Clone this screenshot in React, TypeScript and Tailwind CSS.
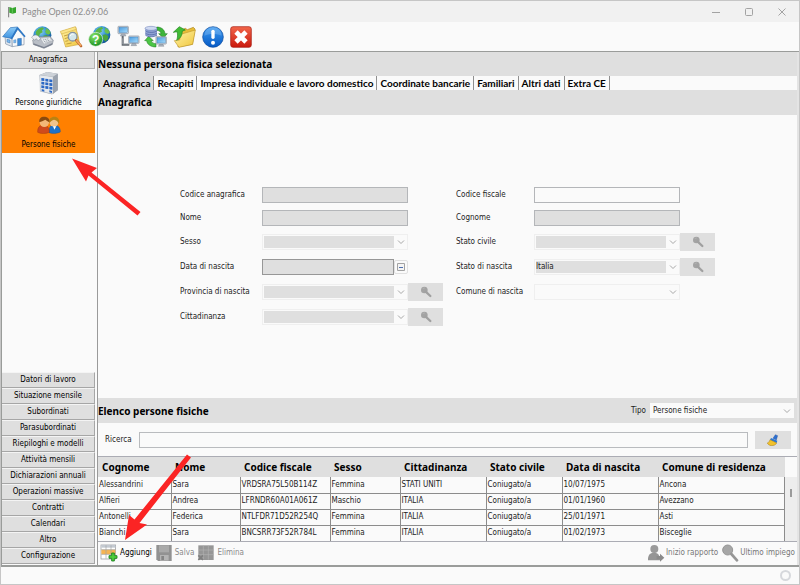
import React, { useState } from 'react';

interface Person {
  cognome: string;
  nome: string;
  codiceFiscale: string;
  sesso: string;
  cittadinanza: string;
  statoCivile: string;
  dataNascita: string;
  comune: string;
}

const people: Person[] = [
  { cognome: 'Alessandrini', nome: 'Sara', codiceFiscale: 'VRDSRA75L50B114Z', sesso: 'Femmina', cittadinanza: 'STATI UNITI', statoCivile: 'Coniugato/a', dataNascita: '10/07/1975', comune: 'Ancona' },
  { cognome: 'Alfieri', nome: 'Andrea', codiceFiscale: 'LFRNDR60A01A061Z', sesso: 'Maschio', cittadinanza: 'ITALIA', statoCivile: 'Coniugato/a', dataNascita: '01/01/1960', comune: 'Avezzano' },
  { cognome: 'Antonelli', nome: 'Federica', codiceFiscale: 'NTLFDR71D52R254Q', sesso: 'Femmina', cittadinanza: 'ITALIA', statoCivile: 'Coniugato/a', dataNascita: '25/01/1971', comune: 'Asti' },
  { cognome: 'Bianchi', nome: 'Sara', codiceFiscale: 'BNCSRR73F52R784L', sesso: 'Femmina', cittadinanza: 'ITALIA', statoCivile: 'Coniugato/a', dataNascita: '01/02/1973', comune: 'Bisceglie' },
];

const columns: { key: keyof Person; label: string; width: string }[] = [
  { key: 'cognome', label: 'Cognome', width: 'w-[73px]' },
  { key: 'nome', label: 'Nome', width: 'w-[69px]' },
  { key: 'codiceFiscale', label: 'Codice fiscale', width: 'w-[90px]' },
  { key: 'sesso', label: 'Sesso', width: 'w-[70px]' },
  { key: 'cittadinanza', label: 'Cittadinanza', width: 'w-[86px]' },
  { key: 'statoCivile', label: 'Stato civile', width: 'w-[76px]' },
  { key: 'dataNascita', label: 'Data di nascita', width: 'w-[96px]' },
  { key: 'comune', label: 'Comune di residenza', width: '' },
];

const tabs = ['Anagrafica', 'Recapiti', 'Impresa individuale e lavoro domestico', 'Coordinate bancarie', 'Familiari', 'Altri dati', 'Extra CE'];

const sections = [
  'Datori di lavoro', 'Situazione mensile', 'Subordinati', 'Parasubordinati', 'Riepiloghi e modelli', 'Attività mensili',
  'Dichiarazioni annuali', 'Operazioni massive', 'Contratti', 'Calendari', 'Altro', 'Configurazione',
];

/* ---------- toolbar icons ---------- */

const Defs: React.FC = () => (
  <svg className="absolute h-0 w-0" aria-hidden="true">
    <defs>
      <radialGradient id="globe" cx="40%" cy="30%" r="75%">
        <stop offset="0" stopColor="#8fd0f5" />
        <stop offset="0.5" stopColor="#2f8fd0" />
        <stop offset="1" stopColor="#0d4a8c" />
      </radialGradient>
      <linearGradient id="roof" x1="0" y1="0" x2="0" y2="1">
        <stop offset="0" stopColor="#8ccbf8" />
        <stop offset="1" stopColor="#3f93e0" />
      </linearGradient>
      <linearGradient id="paper" x1="0" y1="0" x2="1" y2="1">
        <stop offset="0" stopColor="#fff3a8" />
        <stop offset="1" stopColor="#f0c63c" />
      </linearGradient>
      <radialGradient id="green" cx="40%" cy="30%" r="75%">
        <stop offset="0" stopColor="#8be86a" />
        <stop offset="1" stopColor="#138a1c" />
      </radialGradient>
      <linearGradient id="screen" x1="0" y1="0" x2="1" y2="1">
        <stop offset="0" stopColor="#4d9de0" />
        <stop offset="1" stopColor="#a5dafa" />
      </linearGradient>
      <linearGradient id="blueball" x1="0" y1="0" x2="0" y2="1">
        <stop offset="0" stopColor="#3f9df2" />
        <stop offset="1" stopColor="#0558c4" />
      </linearGradient>
      <linearGradient id="redbox" x1="0" y1="0" x2="0" y2="1">
        <stop offset="0" stopColor="#f2664a" />
        <stop offset="1" stopColor="#c9190d" />
      </linearGradient>
    </defs>
  </svg>
);

const Land: React.FC = () => (
  <>
    <path d="M17 22c4-9 12-14 20-15l5 4-6 5 2 6-8 4-3 8-7 1z" fill="#5cb545" />
    <path d="M46 9c8 2 14 8 16 15l-6 5-7-3-4-7 4-5z" fill="#6bc04c" />
    <path d="M40 32l10-2 8 6-2 10-8 6-6-8z" fill="#4ba53a" />
  </>
);

const HomeIcon = () => (
  <svg viewBox="0 0 72 72" className="h-6 w-6">
    <path d="M9 34l22 6v25L11 57z" fill="#dfe6ee" stroke="#7e90a4" strokeWidth="2" />
    <path d="M30 38L47 13l19 22v24l-35 6z" fill="#f8fafc" stroke="#7e90a4" strokeWidth="2" />
    <path d="M2 35L25 8l22-2-19 34z" fill="url(#roof)" stroke="#2a6fb8" strokeWidth="2" />
    <path d="M28 42L47 9l22 26" fill="none" stroke="#2d78c6" strokeWidth="5" strokeLinejoin="round" />
    <path d="M47 41l11-1v20l-11 2z" fill="#3d8cdc" stroke="#2864a2" strokeWidth="1.5" />
    <path d="M15 43l9 2v9l-9-3z" fill="#7db9ee" stroke="#3f78b4" strokeWidth="1.5" />
    <path d="M35 45l7-1v9l-7 1z" fill="#7db9ee" stroke="#3f78b4" strokeWidth="1" />
  </svg>
);

const WebPhoneIcon = () => (
  <svg viewBox="0 0 72 72" className="h-6 w-6">
    <circle cx="37" cy="31" r="27" fill="url(#globe)" />
    <Land />
    <path d="M8 45l12-9 40-2 10 12-3 12-25 12L10 58z" fill="#b9bec6" stroke="#6d7580" strokeWidth="1.5" />
    <path d="M5 37c4-7 13-10 20-4l7 8-7 6-7-6-4 5z" fill="#eceef1" stroke="#757d88" strokeWidth="1.5" />
    <path d="M31 40l28-3 8 10-24 12z" fill="#e9ecef" stroke="#8b929c" strokeWidth="1" />
    <path d="M39 45l18-4M42 50l19-5M44 55l18-7" stroke="#7c858f" strokeWidth="2" strokeDasharray="4 2" />
    <path d="M11 55l31 11 25-12v5L42 70 10 59z" fill="#7b8290" />
  </svg>
);

const NoteSearchIcon = () => (
  <svg viewBox="0 0 72 72" className="h-6 w-6">
    <path d="M6 20l44-14 8 30 4 22-42 8z" fill="url(#paper)" stroke="#cda63a" strokeWidth="2" />
    <path d="M4 19L49 5l3 8L7 27z" fill="#fbe58b" stroke="#cda63a" strokeWidth="1.5" />
    <path d="M15 33l20-6M17 41l10-3M19 49l9-2M22 57l16-3" stroke="#b99233" strokeWidth="2.5" />
    <circle cx="41" cy="35" r="13" fill="#cfe8f8" fillOpacity="0.9" stroke="#8694a2" strokeWidth="4" />
    <path d="M34 33c1-5 6-7 10-5" stroke="#fff" strokeWidth="3" fill="none" />
    <path d="M52 46l14 17" stroke="#b8622c" strokeWidth="8" strokeLinecap="round" />
    <path d="M53 47l12 14" stroke="#f3a55c" strokeWidth="5" strokeLinecap="round" />
  </svg>
);

const WebHelpIcon = () => (
  <svg viewBox="0 0 72 72" className="h-6 w-6">
    <g transform="translate(8 -1) scale(.97)">
      <circle cx="37" cy="31" r="27" fill="url(#globe)" />
      <Land />
    </g>
    <circle cx="26" cy="43" r="21" fill="url(#green)" stroke="#e3f5df" strokeWidth="2" />
    <text x="26" y="56" textAnchor="middle" fill="#fff" fontSize="36" fontWeight="bold" fontFamily="Liberation Sans, sans-serif">?</text>
  </svg>
);

const Monitor: React.FC<{ x: number; y: number }> = ({ x, y }) => (
  <g transform={`translate(${x} ${y})`}>
    <path d="M12 22h9l4 8H8z" fill="#a9b1bb" stroke="#6d7682" strokeWidth="1" />
    <rect x="1" y="1" width="31" height="22" rx="2" fill="#dfe4ea" stroke="#7f8a96" strokeWidth="2" />
    <rect x="4" y="4" width="25" height="16" fill="url(#screen)" stroke="#2d6da8" strokeWidth="1" />
  </g>
);

const NetworkIcon = () => (
  <svg viewBox="0 0 72 72" className="h-6 w-6">
    <path d="M20 32v27h20" fill="none" stroke="#62686f" strokeWidth="6" />
    <path d="M20 40v17h20" fill="none" stroke="#a3a9b0" strokeWidth="2" />
    <Monitor x={5} y={3} />
    <Monitor x={37} y={32} />
  </svg>
);

const SyncIcon = () => (
  <svg viewBox="0 0 72 72" className="h-6 w-6">
    <path d="M38 6c14 0 24 8 25 20l7 0-12 13-14-13h7c-1-6-6-10-13-10z" fill="#3db43a" stroke="#167418" strokeWidth="1.5" />
    <path d="M36 66C20 66 9 58 8 47H2l12-13 14 13h-7c2 5 8 9 15 9z" fill="#4cc544" stroke="#167418" strokeWidth="1.5" />
    <path d="M4 10v20c5 7 30 7 35 0V10z" fill="#8fa2d4" />
    <path d="M4 17c6 7 29 7 35 0M4 24c6 7 29 7 35 0M4 30c6 7 29 7 35 0" stroke="#4a5f9f" strokeWidth="2" fill="none" />
    <ellipse cx="21" cy="10" rx="18" ry="6" fill="#cfd9f2" stroke="#6478b2" strokeWidth="1.5" />
    <Monitor x={35} y={34} />
  </svg>
);

const FolderUpIcon = () => (
  <svg viewBox="0 0 72 72" className="h-6 w-6">
    <path d="M22 18l18-8 6 4 18-7 5 5-8 46-43 8z" fill="#e8bd38" stroke="#a98420" strokeWidth="2" />
    <path d="M26 28l44-13-8 43-41 9-14-20 16-2z" fill="url(#paper)" stroke="#c19a2c" strokeWidth="2" />
    <path d="M4 22L22 5l18 10-9 3c0 13-6 23-17 28 3-9 4-17 1-26z" fill="#42bb36" stroke="#1f861f" strokeWidth="2" />
  </svg>
);

const AlertIcon = () => (
  <svg viewBox="0 0 72 72" className="h-6 w-6">
    <circle cx="36" cy="36" r="31" fill="url(#blueball)" stroke="#07479c" strokeWidth="2" />
    <path d="M10 32a26 26 0 0 1 52 0c-14-7-38-7-52 0z" fill="#fff" fillOpacity="0.18" />
    <rect x="31" y="14" width="10" height="28" rx="5" fill="#fff" />
    <circle cx="36" cy="53" r="6" fill="#fff" />
  </svg>
);

const CloseAppIcon = () => (
  <svg viewBox="0 0 72 72" className="h-6 w-6">
    <rect x="5" y="5" width="62" height="62" rx="7" fill="url(#redbox)" stroke="#a3150b" strokeWidth="2" />
    <path d="M21 21l30 30M51 21L21 51" stroke="#fff" strokeWidth="14" />
  </svg>
);

const BuildingIcon = () => (
  <svg viewBox="0 0 72 72" className="h-6 w-6">
    <path d="M8 12L30 3l32 5v50L44 70 10 61z" fill="#8f97a3" />
    <path d="M8 12l40 5v52l-38-8z" fill="#e6e9ed" stroke="#a5acb5" strokeWidth="1" />
    <path d="M48 17l14-9v50L48 69z" fill="#9ba3ae" />
    <path d="M8 12L30 3l32 5-14 9z" fill="#cdd2d8" />
    {[21, 32, 43].map(y => (
      <g key={y} fill="#2b68c4">
        <path d={`M13 ${y}l9 1v8l-9-1z`} />
        <path d={`M25 ${y + 2}l9 1v8l-9-1z`} />
        <path d={`M37 ${y + 4}l9 1v8l-9-1z`} />
      </g>
    ))}
    <path d="M14 54l8 2v6l-8-2zM37 58l8 2v6l-8-2z" fill="#2b68c4" />
  </svg>
);

const PeopleIcon = () => (
  <svg viewBox="0 0 72 54" className="h-[18px] w-6">
    <path d="M36 50c-1-15 4-23 15-23s20 8 19 21c-8 5-26 6-34 2z" fill="#1f72c8" stroke="#0d4a8e" strokeWidth="1" />
    <circle cx="51" cy="18" r="14" fill="#f3c48b" />
    <path d="M37 22C34 8 42 2 52 2s18 8 13 22c-2-9-7-12-14-13-6 2-10 5-14 11z" fill="#b98212" />
    <path d="M48 31l4 10 6-10z" fill="#fff" />
    <path d="M2 49c-1-15 6-22 17-22s19 8 18 22c-8 5-28 5-35 0z" fill="#cf4a1c" stroke="#8d2d0c" strokeWidth="1" />
    <circle cx="22" cy="19" r="14" fill="#f3b878" />
    <path d="M7 19C5 8 12 2 21 2s18 5 16 17c-5-3-9-6-12-8-6 4-13 5-18 8z" fill="#8a4a0e" />
  </svg>
);

const KeyIcon = () => (
  <svg viewBox="0 0 36 36" className="h-3 w-3">
    <circle cx="13" cy="12" r="10" fill="#a3a3a3" />
    <path d="M17 17l14 13" stroke="#a0a0a0" strokeWidth="7" strokeLinecap="round" />
    <path d="M8 9c2-3 5-3 7-3" stroke="#b9b9b9" strokeWidth="2" fill="none" />
  </svg>
);

const BrushIcon = () => (
  <svg viewBox="0 0 36 36" className="h-3 w-3">
    <path d="M18 13l7-11 7 3-4 13z" fill="#2c6fd0" stroke="#1a478f" strokeWidth="1" />
    <path d="M12 12l19 8-2 7-20-9z" fill="#2a78d8" />
    <path d="M9 17l20 10c-3 6-9 8-16 8C6 34 3 31 1 27c5-2 6-5 8-10z" fill="#f2c22c" stroke="#a57b10" strokeWidth="1.5" />
  </svg>
);

const GridAddIcon = () => (
  <svg viewBox="0 0 54 54" className="h-[18px] w-[18px]">
    <rect x="3" y="3" width="44" height="42" fill="#fff" stroke="#8b8f96" strokeWidth="2" />
    <rect x="4" y="3" width="42" height="8" fill="#c3c9d1" />
    <rect x="4" y="17" width="42" height="14" fill="#f7b552" />
    <path d="M4 17h42M4 31h42M18 4v40M33 4v40" stroke="#a0a3a8" strokeWidth="2" />
    <path d="M35 27h8v8h8v8h-8v8h-8v-8h-8v-8h8z" fill="#4fcf3c" stroke="#157c17" strokeWidth="2.5" />
  </svg>
);

const SaveIcon = () => (
  <svg viewBox="0 0 54 54" className="h-[18px] w-[18px]">
    <path d="M4 3h46v48H9l-5-5z" fill="#929292" />
    <rect x="12" y="4" width="30" height="21" fill="#a9a9a9" />
    <rect x="15" y="33" width="26" height="17" fill="#b4b4b4" />
    <rect x="19" y="36" width="8" height="12" fill="#858585" />
  </svg>
);

const GridDeleteIcon = () => (
  <svg viewBox="0 0 54 54" className="h-[18px] w-[18px]">
    <rect x="4" y="4" width="46" height="44" fill="#969696" />
    <path d="M4 18h46M4 32h46M19 5v42M34 5v42" stroke="#b2b2b2" strokeWidth="2" />
    <path d="M4 34l14 14M18 34L4 48" stroke="#808080" strokeWidth="5" />
  </svg>
);

const UserStartIcon = () => (
  <svg viewBox="0 0 54 54" className="h-[18px] w-[18px]">
    <circle cx="22" cy="15" r="12" fill="#9a9a9a" />
    <path d="M3 49c-1-16 6-23 18-23s18 7 18 23z" fill="#959595" />
    <path d="M29 36h10v-7l13 12-13 12v-7H29z" fill="#8a8a8a" />
  </svg>
);

const LensIcon = () => (
  <svg viewBox="0 0 54 54" className="h-[18px] w-[18px]">
    <circle cx="20" cy="18" r="15" fill="#a6a6a6" stroke="#969696" strokeWidth="3" />
    <path d="M31 30l17 19" stroke="#969696" strokeWidth="8" strokeLinecap="round" />
  </svg>
);

const toolbar = [
  { label: 'Home', icon: HomeIcon },
  { label: 'Contatti', icon: WebPhoneIcon },
  { label: 'Cerca', icon: NoteSearchIcon },
  { label: 'Guida', icon: WebHelpIcon },
  { label: 'Rete', icon: NetworkIcon },
  { label: 'Sincronizza', icon: SyncIcon },
  { label: 'Apri', icon: FolderUpIcon },
  { label: 'Avvisi', icon: AlertIcon },
  { label: 'Esci', icon: CloseAppIcon },
];

/* ---------- form fields ---------- */

const Chevron: React.FC = () => (
  <svg viewBox="0 0 8 8" className="pointer-events-none absolute right-[3px] top-1/2 h-2 w-2 -translate-y-1/2">
    <path d="M1 2.5l3 3 3-3" fill="none" stroke="#a8a8a8" strokeWidth="1" />
  </svg>
);

const TextField: React.FC<{ id: string; label: string; disabled?: boolean }> = ({ id, label, disabled }) => (
  <>
    <label htmlFor={id}>{label}</label>
    <div className="flex">
      <input
        id={id}
        type="text"
        disabled={disabled}
        className="h-4 w-[146px] border border-[#b4b6b9] bg-[#fafafa] px-1 outline-none disabled:bg-[#dfdfdf]"
      />
    </div>
  </>
);

interface SelectFieldProps {
  id: string;
  label: string;
  value?: string;
  lookup?: boolean;
  plain?: boolean;
}

const SelectField: React.FC<SelectFieldProps> = ({ id, label, value = '', lookup, plain }) => (
  <>
    <label htmlFor={id}>{label}</label>
    <div className="flex items-center">
      <div className="relative w-[146px]">
        <select
          id={id}
          disabled
          defaultValue={value}
          className={`block h-4 w-full appearance-none border border-[#efefef] bg-clip-content py-px pl-px pr-[13px] text-[#222] opacity-100 ${plain ? 'bg-[#fafafa]' : 'bg-[#dfdfdf]'}`}
        >
          <option value={value}>{value}</option>
        </select>
        <Chevron />
      </div>
      {lookup && (
        <button type="button" disabled aria-label={`Cerca ${label}`} className="flex h-[18px] w-[35px] items-center justify-center bg-[#dfdfdf]">
          <KeyIcon />
        </button>
      )}
    </div>
  </>
);

const DateField: React.FC<{ id: string; label: string }> = ({ id, label }) => (
  <>
    <label htmlFor={id}>{label}</label>
    <div className="flex items-center">
      <input id={id} type="text" disabled className="h-4 w-[132px] border border-[#979797] bg-[#dfdfdf] px-1" />
      <button type="button" disabled aria-label="Calendario" className="flex h-[14px] w-[14px] items-center justify-center rounded-xs border border-[#e0e0e0] bg-[#fafafa]">
        <svg viewBox="0 0 8 8" className="h-2 w-2">
          <path d="M.5.5h7v7h-7z" fill="#f4f4f4" stroke="#a2a2a2" />
          <path d="M2 4.500h4" stroke="#4e6fae" />
        </svg>
      </button>
    </div>
  </>
);

const RedArrows: React.FC = () => (
  <svg className="pointer-events-none absolute inset-0 h-full w-full" aria-hidden="true">
    <g fill="#fb2424">
      <path d="M71 157.500L96 167 90.500 171.500 139.500 211 136.500 214.500 87.500 174.500 85 180.500z" />
      <path d="M124 539L128 514 133.500 518.500 186 453.500 190 456.500 138.500 522 146 523.500z" />
    </g>
  </svg>
);

const App: React.FC = () => {
  const [activeTab, setActiveTab] = useState('Anagrafica');
  const [query, setQuery] = useState('');

  return (
    <div className="relative flex min-h-screen flex-col border border-[#c6c6c6] bg-[#fafafa] font-['DejaVu_Sans_Condensed','DejaVu_Sans',sans-serif] text-[8px] leading-[10px] text-[#222]">
      <Defs />

      <header className="flex h-[21px] items-center bg-[#f1f1f1] pl-1.5">
        <svg viewBox="0 0 30 36" className="h-3 w-[10px]">
          <path d="M5 3v31" stroke="#777" strokeWidth="3" />
          <path d="M7 3l9 3 11-3v17l-10 3-10-3z" fill="#35a52c" />
          <path d="M16 6v17" stroke="#7fd574" strokeWidth="2" />
        </svg>
        <h1 className="ml-[5px] flex-1 font-['Lato',sans-serif] text-[9px] text-[#8c8c8c]">Paghe Open 02.69.06</h1>
        <div className="flex gap-[21px] pr-[11px]">
          <button type="button" aria-label="Riduci a icona">
            <svg viewBox="0 0 12 12" className="h-3 w-3"><path d="M2 6.500h8" stroke="#a3a3a3" /></svg>
          </button>
          <button type="button" aria-label="Ingrandisci">
            <svg viewBox="0 0 12 12" className="h-3 w-3"><rect x="2.500" y="2.500" width="7" height="7" rx="1" fill="none" stroke="#a3a3a3" /></svg>
          </button>
          <button type="button" aria-label="Chiudi">
            <svg viewBox="0 0 12 12" className="h-3 w-3"><path d="M2.500 2.500l7 7M9.500 2.500l-7 7" stroke="#a3a3a3" /></svg>
          </button>
        </div>
      </header>

      <nav className="flex h-[29px] w-[252px] items-center justify-between pl-px">
        {toolbar.map(({ label, icon: ToolIcon }) => (
          <button key={label} type="button" aria-label={label}>
            <ToolIcon />
          </button>
        ))}
      </nav>

      <div className="flex flex-1 border-b-2 border-l border-t border-[#9a9c9a]">
        <aside className="flex w-[95px] shrink-0 flex-col border-r-2 border-[#fafafa] pb-px text-black">
          <button type="button" className="h-[17px] border-b border-r border-[#b4b4b4] bg-[#dfdfdf] text-center">Anagrafica</button>
          <button type="button" className="flex h-[41px] flex-col items-center justify-between pb-0.5 pt-0.5">
            <BuildingIcon />
            <span>Persone giuridiche</span>
          </button>
          <button type="button" className="flex h-[43px] flex-col items-center justify-between bg-[#ff8000] pb-[3px] pt-1.5">
            <PeopleIcon />
            <span>Persone fisiche</span>
          </button>
          <div className="flex-1" />
          {sections.map(section => (
            <button key={section} type="button" className="h-4 border-b border-r border-t border-b-[#a6a6a6] border-r-[#a6a6a6] border-t-[#f4f4f4] bg-[#dfdfdf] text-center leading-[14px]">
              {section}
            </button>
          ))}
        </aside>

        <main className="flex min-w-0 flex-1 flex-col border-l border-[#9a9a9a]">
          <h2 className="h-6 bg-[#dfdfdf] font-['Noto_Sans',sans-serif] text-[10px] font-bold leading-[25px] text-black">Nessuna persona fisica selezionata</h2>

          <div role="tablist" className="flex h-[14px] font-['Lato',sans-serif] text-[10px] font-bold leading-[14px] text-black">
            {tabs.map(tab => (
              <button
                key={tab}
                type="button"
                role="tab"
                aria-selected={tab === activeTab}
                onClick={() => setActiveTab(tab)}
                className={`whitespace-nowrap border-r border-[#8f8f8f] ${tab === activeTab ? 'bg-[#dfdfdf] pl-[5px] pr-[3px]' : 'bg-[#fafafa] px-[3px]'}`}
              >
                {tab}
              </button>
            ))}
          </div>

          <h3 className="h-[25px] bg-[#dfdfdf] font-['Noto_Sans',sans-serif] text-[10px] font-bold leading-[25px] text-black">Anagrafica</h3>

          <form className="flex flex-1 items-center justify-center py-4">
            <div className="grid grid-cols-[82px_194px_78px_181px] items-center gap-y-[7px]">
              <TextField id="codice-anagrafica" label="Codice anagrafica" disabled />
              <TextField id="codice-fiscale" label="Codice fiscale" />
              <TextField id="nome" label="Nome" disabled />
              <TextField id="cognome" label="Cognome" disabled />
              <SelectField id="sesso" label="Sesso" />
              <SelectField id="stato-civile" label="Stato civile" lookup />
              <DateField id="data-nascita" label="Data di nascita" />
              <SelectField id="stato-nascita" label="Stato di nascita" value="Italia" lookup />
              <SelectField id="provincia" label="Provincia di nascita" lookup />
              <SelectField id="comune" label="Comune di nascita" plain />
              <SelectField id="cittadinanza" label="Cittadinanza" lookup />
            </div>
          </form>

          <div className="flex h-[25px] items-center justify-between bg-[#dfdfdf] pr-[3px]">
            <h3 className="font-['Noto_Sans',sans-serif] text-[10px] font-bold text-black">Elenco persone fisiche</h3>
            <div className="flex items-center gap-1">
              <label htmlFor="tipo">Tipo</label>
              <div className="relative w-36">
                <select id="tipo" defaultValue="Persone fisiche" className="block h-[15px] w-full appearance-none bg-[#fafafa] pl-[3px] pr-4">
                  <option>Persone fisiche</option>
                  <option>Persone giuridiche</option>
                </select>
                <Chevron />
              </div>
            </div>
          </div>

          <div className="flex h-[33px] items-center gap-[7px] pl-[7px] pr-1.5">
            <label htmlFor="ricerca">Ricerca</label>
            <input
              id="ricerca"
              type="text"
              value={query}
              onChange={e => setQuery(e.target.value)}
              className="h-4 min-w-0 flex-1 border border-[#b9bbbe] bg-[#fafafa] px-1 outline-none"
            />
            <button type="button" aria-label="Pulisci ricerca" onClick={() => setQuery('')} className="flex h-[18px] w-9 items-center justify-center bg-[#dfdfdf]">
              <BrushIcon />
            </button>
          </div>

          <div className="flex border-b border-t border-[#abacb4]">
            <table className="min-w-0 flex-1 table-fixed border-collapse">
              <thead>
                <tr className="h-5 bg-[#dfdfdf] text-left font-['Noto_Sans',sans-serif] text-[10px] text-black">
                  {columns.map(col => (
                    <th key={col.key} className={`whitespace-nowrap p-0 pl-1 font-bold ${col.width}`}>{col.label}</th>
                  ))}
                </tr>
              </thead>
              <tbody>
                {people.map(person => (
                  <tr key={person.codiceFiscale} className="h-4 border-b border-[#8c8c8c] last:border-b-0">
                    {columns.map(col => (
                      <td key={col.key} className="whitespace-nowrap border-r border-[#8c8c8c] p-0 pl-px">{person[col.key]}</td>
                    ))}
                  </tr>
                ))}
              </tbody>
            </table>
            <div className="mt-5 flex w-3 justify-center bg-[#ededed] pt-3">
              <div className="h-2 w-0.5 bg-[#9b9b9b]" />
            </div>
          </div>

          <div className="flex h-[23px] items-center justify-between px-0.5 pb-0.5">
            <div className="flex items-center gap-[3px]">
              <button type="button" className="flex items-center gap-0.5 text-black"><GridAddIcon />Aggiungi</button>
              <button type="button" disabled className="flex items-center gap-0.5 text-[#8a8a8a]"><SaveIcon />Salva</button>
              <button type="button" disabled className="flex items-center gap-0.5 text-[#8a8a8a]"><GridDeleteIcon />Elimina</button>
            </div>
            <div className="flex items-center gap-[3px]">
              <button type="button" disabled className="flex items-center gap-px text-[#777]"><UserStartIcon />Inizio rapporto</button>
              <button type="button" disabled className="flex items-center gap-px text-[#777]"><LensIcon />Ultimo impiego</button>
            </div>
          </div>
        </main>
        <div className="w-0.5 shrink-0 bg-[#e4e4e4]" />
      </div>

      <footer className="flex h-[17px] items-center justify-end pr-2">
        <div className="h-[11px] w-[11px] rounded-full border-2 border-[#d6d8dc]" />
      </footer>

      <RedArrows />
    </div>
  );
};

export default App;
